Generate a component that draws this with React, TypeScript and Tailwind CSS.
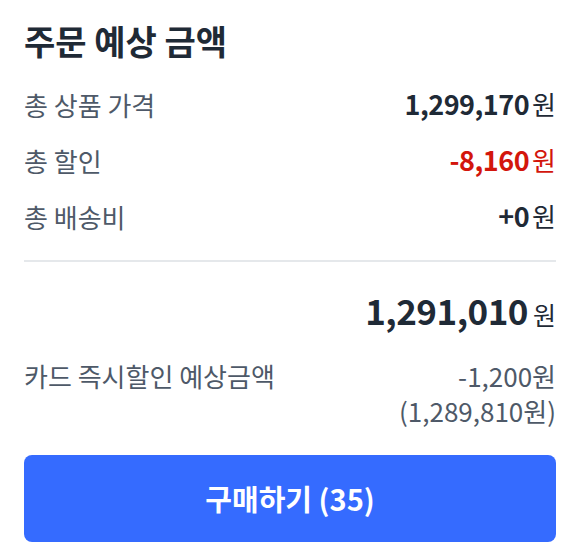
import React from 'react';

const font = { fontFamily: '"Noto Sans CJK KR", "Noto Sans", sans-serif' };

interface RowProps {
  label: string;
  value: string;
  red?: boolean;
}

const Row: React.FC<RowProps> = ({ label, value, red }) => (
  <div className="flex h-14 items-center justify-between">
    <span className="text-[26px] text-[#4e5968]">{label}</span>
    <span className={`flex items-baseline ${red ? 'text-[#d3160c]' : 'text-[#1f2a36]'}`}>
      <span className="text-[27px] font-bold tracking-[-0.5px]">{value}</span>
      <span className="ml-[3px] text-[26px]">원</span>
    </span>
  </div>
);

export default function App() {
  const rows: RowProps[] = [
    { label: '총 상품 가격', value: '1,299,170' },
    { label: '총 할인', value: '-8,160', red: true },
    { label: '총 배송비', value: '+0' },
  ];

  return (
    <div className="min-h-screen bg-white pl-6 pr-[18px] pt-[22px]" style={font}>
      <h2 className="text-[34px] font-bold leading-[38px] text-[#1f2a36]">주문 예상 금액</h2>

      <div className="mt-4">
        {rows.map((r) => (
          <Row key={r.label} {...r} />
        ))}
      </div>

      <div className="mt-4 h-[2px] bg-[#e5e8eb]" />

      <div className="mt-7 flex h-10 items-baseline justify-end text-[#1f2a36]">
        <span className="text-[35px] font-bold leading-10 tracking-[-0.5px]">1,291,010</span>
        <span className="ml-[5px] text-[25px]">원</span>
      </div>

      <div className="mt-7 flex justify-between text-[26px] leading-[35px] text-[#4e5968]">
        <span>카드 즉시할인 예상금액</span>
        <div className="flex flex-col items-end">
          <span>-1,200원</span>
          <span>(1,289,810원)</span>
        </div>
      </div>

      <button className="mt-[27px] flex h-[87px] w-full items-center justify-center rounded-lg bg-[#356bff] text-[29px] font-bold text-white">
        구매하기 (35)
      </button>
    </div>
  );
}
